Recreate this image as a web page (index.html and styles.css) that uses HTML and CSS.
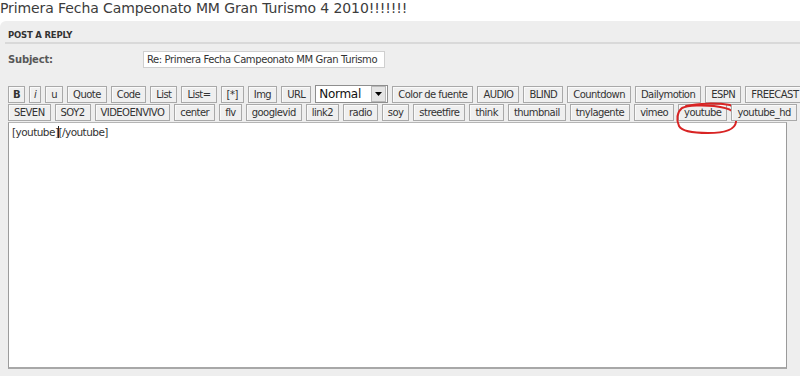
FILE: index.html
```html
<!DOCTYPE html>
<html>
<head>
<meta charset="utf-8">
<link rel="stylesheet" href="styles.css">
</head>
<body>
<div class="page">
  <h1 class="title">Primera Fecha Campeonato MM Gran Turismo 4 2010!!!!!!!</h1>
  <div class="panel">
    <div class="panel-head">POST A REPLY</div>
    <div class="subject-row">
      <span class="label">Subject:</span>
      <span class="input">Re: Primera Fecha Campeonato MM Gran Turismo</span>
    </div>
    <div class="toolbar">
      <div class="tb-row">
        <span class="btn b">B</span>
        <span class="btn it">i</span>
        <span class="btn">u</span>
        <span class="btn">Quote</span>
        <span class="btn">Code</span>
        <span class="btn">List</span>
        <span class="btn">List=</span>
        <span class="btn">[*]</span>
        <span class="btn">Img</span>
        <span class="btn">URL</span>
        <span class="select"><span class="sel-text">Normal</span><span class="sel-arrow"><svg width="7" height="4" viewBox="0 0 7 4"><path d="M0 0H7L3.5 4Z" fill="#000"/></svg></span></span>
        <span class="btn">Color de fuente</span>
        <span class="btn">AUDIO</span>
        <span class="btn">BLIND</span>
        <span class="btn">Countdown</span>
        <span class="btn">Dailymotion</span>
        <span class="btn">ESPN</span>
        <span class="btn">FREECAST</span>
      </div>
      <div class="tb-row">
        <span class="btn">SEVEN</span>
        <span class="btn">SOY2</span>
        <span class="btn">VIDEOENVIVO</span>
        <span class="btn">center</span>
        <span class="btn">flv</span>
        <span class="btn">googlevid</span>
        <span class="btn">link2</span>
        <span class="btn">radio</span>
        <span class="btn">soy</span>
        <span class="btn">streetfire</span>
        <span class="btn">think</span>
        <span class="btn">thumbnail</span>
        <span class="btn">tnylagente</span>
        <span class="btn">vimeo</span>
        <span class="btn yt">youtube<svg class="circle" width="66" height="34" viewBox="0 0 66 34"><path d="M12 4 C24 1 44 1 56 3 C62 5 63 12 62 20 C61 28 50 31 34 31 C20 31 8 30 5 24 C2 18 3 10 8 6 C14 3 30 3 40 4 C48 5 54 6 58 9" fill="none" stroke="#d82424" stroke-width="2" stroke-linecap="round"/></svg></span>
        <span class="btn">youtube_hd</span>
      </div>
    </div>
    <div class="editor">[youtube]<span class="caret"></span>[/youtube]</div>
  </div>
</div>
</body>
</html>
```
FILE: styles.css
```css
html, body {
  margin: 0;
  padding: 0;
  background: #fff;
  overflow: hidden;
}
.page {
  width: 800px;
  height: 376px;
  overflow: hidden;
  font-family: "DejaVu Sans", Verdana, sans-serif;
  color: #333;
}
.title {
  margin: 0;
  height: 21px;
  font-size: 14px;
  font-weight: normal;
  line-height: 17px;
  color: #3c3c3c;
  white-space: nowrap;
  letter-spacing: -0.1px;
}
.panel {
  background: #eeeeee;
  border-top-left-radius: 6px;
  height: 355px;
  padding: 0;
}
.panel-head {
  margin-left: 5px;
  padding: 9px 0 0 3px;
  height: 12px;
  font-size: 8.5px;
  font-weight: bold;
  color: #333;
  border-bottom: 2px solid #d9d9d9;
  letter-spacing: -0.2px;
}
.subject-row {
  display: flex;
  align-items: center;
  padding: 7px 0 0 8px;
  height: 17px;
}
.label {
  width: 135px;
  font-size: 10px;
  font-weight: bold;
  color: #585858;
  letter-spacing: -0.2px;
}
.input {
  box-sizing: border-box;
  width: 242px;
  height: 17px;
  background: #fff;
  border: 1px solid #cfcfcf;
  font-size: 10px;
  line-height: 15px;
  padding-left: 3px;
  color: #333;
  white-space: nowrap;
  overflow: hidden;
  letter-spacing: -0.4px;
}
.toolbar {
  margin-top: 18px;
  padding-left: 8px;
}
.tb-row {
  display: flex;
  gap: 4px;
  white-space: nowrap;
  margin-bottom: 1px;
}
.btn {
  position: relative;
  box-sizing: border-box;
  height: 17px;
  padding: 0 5px;
  background: #efefef;
  border: 1px solid #a9a9a9;
  box-shadow: inset 1px 1px 0 #fafafa;
  font-size: 10px;
  line-height: 15px;
  color: #333;
  letter-spacing: -0.55px;
  flex: none;
}
.btn.b {
  font-weight: bold;
  padding: 0 4px;
}
.btn.it {
  font-style: italic;
  padding: 0 4px;
}
.select {
  box-sizing: border-box;
  display: flex;
  align-items: center;
  justify-content: space-between;
  width: 73px;
  height: 18px;
  margin-top: -1px;
  background: #fff;
  border: 1px solid #8e8e8e;
  padding: 0 1px 0 3px;
  flex: none;
}
.sel-text {
  font-size: 12px;
  color: #111;
  letter-spacing: -0.3px;
}
.sel-arrow {
  display: flex;
  align-items: center;
  justify-content: center;
  width: 13px;
  height: 14px;
  background: #e4e4e4;
  border: 1px solid #b8b8b8;
}
.circle {
  position: absolute;
  left: -5px;
  top: -3px;
  pointer-events: none;
}
.editor {
  box-sizing: border-box;
  margin: 1px 0 0 8px;
  width: 779px;
  height: 247px;
  background: #fff;
  border-top: 1px solid #b5b5b5;
  border-left: 1px solid #9c9c9c;
  border-right: 1px solid #9a9a9a;
  border-bottom: 2px solid #a8a8a8;
  padding: 3px 3px;
  font-size: 10.5px;
  color: #333;
  letter-spacing: -0.55px;
}
.caret {
  display: inline-block;
  width: 1px;
  height: 12px;
  background: #222;
  vertical-align: -2px;
  margin-right: -1px;
}
```
